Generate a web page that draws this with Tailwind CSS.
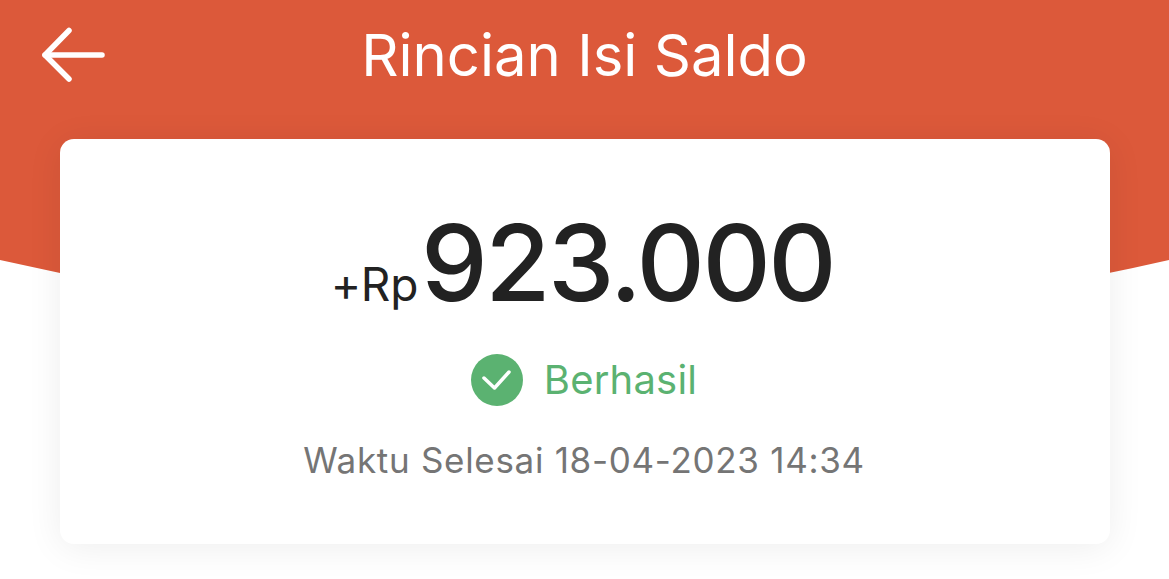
<!DOCTYPE html>
<html lang="en">
  <head>
    <meta charset="UTF-8" />
    <meta name="viewport" content="width=device-width, initial-scale=1.0" />
    <title>Rincian Isi Saldo</title>
    <script src="https://cdn.jsdelivr.net/npm/@tailwindcss/browser@4"></script>
  </head>
  <body class="bg-white font-['Inter',sans-serif]">
    <div class="relative w-[1169px] h-[579px] overflow-hidden">
      <!-- Latar oranye dengan tepi bawah melengkung -->
      <svg class="absolute top-0 left-0" width="1169" height="340" viewBox="0 0 1169 340">
        <path d="M0 0H1169V260Q584.5 394 0 260Z" fill="#dc593a" />
      </svg>

      <div class="relative flex flex-col">
        <!-- Header -->
        <header class="relative flex items-center justify-center h-[110px]">
          <svg class="absolute left-[38px] top-[24px]" width="72" height="62" viewBox="0 0 72 62" fill="none" stroke="#fff" stroke-width="5.5" stroke-linecap="round" stroke-linejoin="round">
            <path d="M7 31H64" />
            <path d="M31 6.500L7 31L31 55" />
          </svg>
          <h1 class="text-[58px] leading-none text-white">Rincian Isi Saldo</h1>
        </header>

        <!-- Kartu -->
        <main class="ml-[60px] w-[1050px] mt-[29px] h-[405px] rounded-[14px] bg-white shadow-[0_4px_36px_rgba(0,0,0,0.07)] flex flex-col items-center">
          <div class="flex items-baseline mt-[68px] pr-[5px] text-[#222222]">
            <span class="text-[46px] leading-none tracking-[-0.3px]">+Rp</span>
            <span class="text-[106px] leading-[112px] ml-[3px] font-medium tracking-[-2.5px]">923.000</span>
          </div>
          <div class="flex items-center gap-[21px] mt-[35px] pr-[2px]">
            <svg width="52" height="52" viewBox="0 0 52 52" fill="none">
              <circle cx="26" cy="26" r="26" fill="#5bb271" />
              <path d="M13 24L23.500 34L38 18" stroke="#fff" stroke-width="3.500" stroke-linecap="round" stroke-linejoin="round" />
            </svg>
            <span class="text-[40px] leading-none text-[#5bb271] tracking-[0.2px]">Berhasil</span>
          </div>
          <p class="text-[35px] leading-none text-[#757575] mt-[37px] pr-[2px] tracking-[0.7px]">Waktu Selesai 18-04-2023 14:34</p>
        </main>
      </div>
    </div>
  </body>
</html>
